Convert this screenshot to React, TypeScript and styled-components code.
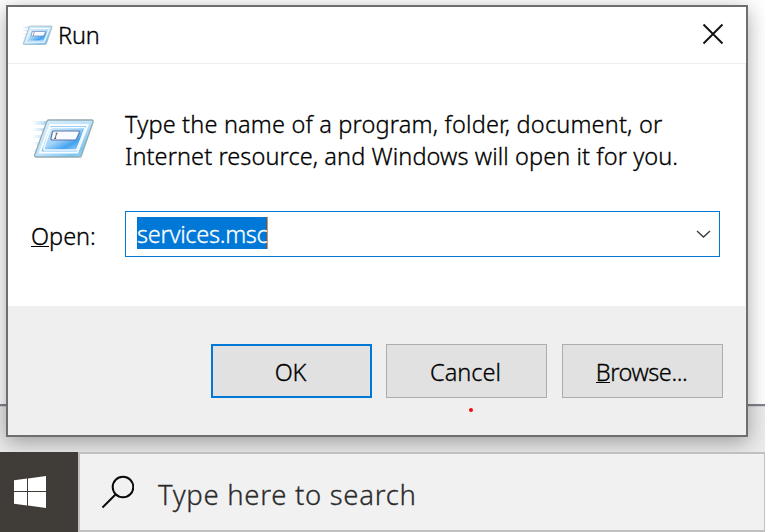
import React from 'react';
import styled, { createGlobalStyle } from 'styled-components';

const GlobalStyle = createGlobalStyle`
  * { box-sizing: border-box; }
  html, body { margin: 0; padding: 0; overflow: hidden; }
  body {
    font-family: "Noto Sans", "Open Sans", sans-serif;
    color: #000;
    -webkit-text-stroke: 0.3px;
  }
`;

const Desktop = styled.div`
  display: flex;
  flex-direction: column;
  width: 765px;
  height: 532px;
  overflow: hidden;
`;

const Backdrop = styled.main`
  flex: 0 0 452px;
  padding: 5px 0 0 6px;
  overflow: hidden;
  background: linear-gradient(#fff 0 404px, #82828e 404px 406px, #d2d2d8 406px 407px, #ebebeb 407px);
`;

const Dialog = styled.section`
  position: relative;
  display: flex;
  flex-direction: column;
  width: 742px;
  height: 432px;
  border: 2px solid #6e6e6e;
  background: #fff;
  box-shadow: 0 5px 20px rgba(0, 0, 0, 0.34);
`;

const TitleBar = styled.header`
  display: flex;
  align-items: center;
  flex: 0 0 57px;
  padding: 0 22px 0 14px;
  border-bottom: 1px solid #ededed;
`;

const Title = styled.h1<{ $spacing: number }>`
  flex: 1;
  margin: 0 0 0 5px;
  font-size: 23.5px;
  font-weight: 300;
  line-height: 32px;
  letter-spacing: ${(p) => p.$spacing}px;
`;

const CloseButton = styled.button`
  display: flex;
  width: 22px;
  height: 22px;
  margin-top: -2px;
  padding: 0;
  border: 0;
  background: none;
`;

const Body = styled.div`
  flex: 0 0 242px;
  padding: 44px 25px 0 22px;
  border-right: 1px solid #f0f0f0;
`;

const Message = styled.div`
  display: grid;
  grid-template-columns: 95px 1fr;
  height: 103px;
`;

const IconSlot = styled.div`
  padding: 10px 0 0 2px;
`;

const Line = styled.span<{ $spacing: number }>`
  display: block;
  width: max-content;
  font-size: 23.5px;
  font-weight: 300;
  line-height: 32px;
  letter-spacing: ${(p) => p.$spacing}px;
  white-space: nowrap;
`;

const Field = styled.div`
  display: grid;
  grid-template-columns: 95px 595px;
  align-items: center;
`;

const Label = styled.label`
  padding: 3px 0 0 1px;
  font-size: 23.5px;
  font-weight: 300;
  line-height: 32px;
`;

const Mnemonic = styled.span`
  box-shadow: 0 -1px 0 #000 inset;
  display: inline-block;
  height: 27px;
  line-height: 32px;
  vertical-align: top;
`;

const Combo = styled.div`
  display: flex;
  align-items: center;
  justify-content: space-between;
  height: 46px;
  padding: 0 8px 2px 11px;
  border: 1px solid #0078d7;
`;

const Selected = styled.span`
  width: 131px;
  height: 32px;
  background: #0078d7;
  border-right: 1px solid #ff8728;
  color: #fff;
  font-size: 23.5px;
  font-weight: 300;
  line-height: 35px;
  letter-spacing: -0.28px;
  white-space: nowrap;
`;

const Footer = styled.footer`
  display: flex;
  flex: 1;
  padding: 38px 0 0 203px;
  background: #efefef;
`;

const Button = styled.button<{ $primary?: boolean; $spacing?: number; $gap?: number }>`
  width: 161px;
  height: 54px;
  margin-right: ${(p) => p.$gap ?? 0}px;
  padding: 2px 2px 0 0;
  border: ${(p) => (p.$primary ? '2px solid #0078d7' : '1px solid #adadad')};
  background: #e1e1e1;
  color: #000;
  font: 300 23.5px/32px "Noto Sans", "Open Sans", sans-serif;
  letter-spacing: ${(p) => p.$spacing ?? 0}px;
  -webkit-text-stroke: 0.3px;
`;

const RedDot = styled.i`
  position: absolute;
  left: 460.5px;
  top: 400.5px;
  width: 4px;
  height: 4px;
  border-radius: 50%;
  background: #f00a14;
`;

const Taskbar = styled.nav`
  display: flex;
  flex: 0 0 80px;
`;

const Start = styled.button`
  flex: 0 0 78px;
  padding: 24px 0 0 14px;
  border: 0;
  background: #403d39;
  text-align: left;
  display: flex;
`;

const Search = styled.div`
  display: flex;
  align-items: center;
  flex: 1;
  padding: 0 0 0 21px;
  border: 2px solid #c0c0c0;
  border-right-width: 1px;
  background: #f1f1f1;
`;

const Placeholder = styled.span`
  margin: 5px 0 0 24px;
  color: #2b2b2b;
  font-size: 27.5px;
  font-weight: 300;
  line-height: 36px;
  letter-spacing: 0.7px;
  white-space: nowrap;
`;

function RunIcon({ width, height, id }: { width: number; height: number; id: string }) {
  return (
    <svg width={width} height={height} viewBox="0 0 64 42" preserveAspectRatio="none" display="block">
      <defs>
        <linearGradient id={`${id}-face`} x1="0" y1="0" x2="1" y2="1">
          <stop offset="0" stopColor="#d9eefb" />
          <stop offset="0.5" stopColor="#bfe3fa" />
          <stop offset="0.8" stopColor="#7cc5f4" />
          <stop offset="1" stopColor="#b8e4fb" />
        </linearGradient>
        <linearGradient id={`${id}-inner`} x1="0" y1="0" x2="1" y2="1">
          <stop offset="0" stopColor="#d3eafb" />
          <stop offset="0.45" stopColor="#a3d4f8" />
          <stop offset="0.7" stopColor="#45a3ee" />
          <stop offset="1" stopColor="#b4e0fb" />
        </linearGradient>
        <linearGradient id={`${id}-trail`}>
          <stop offset="0" stopColor="#8dc8f2" stopOpacity="0" />
          <stop offset="1" stopColor="#7cbcf0" stopOpacity="0.65" />
        </linearGradient>
      </defs>
      <path
        d="M0 3h16l-2 4H0zM0 10h14l-1 3H0zM0 17h12l-1 3H0zM0 24h10l-1 3H0zM0 31h7l-1 3H0z"
        fill={`url(#${id}-trail)`}
      />
      <path d="M4 41h45l13-37-1 5-11 32H5z" fill="#777" opacity=".28" />
      <path
        d="M17 2h43.500q2 0 1.500 2L50 37.500q-.6 1.500-2.500 1.500H4q-2 0-1.300-2L15 3.500q.6-1.500 2-1.500z"
        fill={`url(#${id}-face)`}
        stroke="#93abb0"
        strokeWidth="1.300"
      />
      <path d="M18.500 7h38L46 34.500H8z" fill="#86c4f2" stroke="#fafdff" strokeWidth="2" />
      <path
        d="M20.500 9.500h32.500q1 0 .5 1.500l-7.500 19.500q-.5 1.500-2 1.500H13.500q-2 0-1.300-2L18.500 11q.5-1.500 2-1.500z"
        fill={`url(#${id}-inner)`}
        stroke="#f4faff"
        strokeWidth="1.500"
      />
      <path
        d="M22 13h24.500q2 0 1.500 1.700L45.500 20.500q-.8 1.500-2.500 1.500H21q-2.500 0-1.500-2.500l1-4.500q.4-2 1.500-2z"
        fill="#f8fbff"
        stroke="#5e75a7"
        strokeWidth="1.200"
      />
      <path d="M24 15.200h2m-1 0-1.500 5.300m-1 0h2" stroke="#596064" strokeWidth="1" fill="none" />
    </svg>
  );
}

export default function App() {
  return (
    <>
      <GlobalStyle />
      <Desktop>
        <Backdrop>
          <Dialog role="dialog" aria-label="Run">
            <TitleBar>
              <RunIcon width={31} height={21} id="title" />
              <Title $spacing={-0.2}>Run</Title>
              <CloseButton aria-label="Close">
                <svg width="22" height="22" fill="none" stroke="#111" strokeWidth="1.900">
                  <path d="M1.500 1.500l19 19M20.500 1.500l-19 19" />
                </svg>
              </CloseButton>
            </TitleBar>
            <Body>
              <Message>
                <IconSlot>
                  <RunIcon width={63} height={42} id="large" />
                </IconSlot>
                <div>
                  <Line $spacing={0.18}>Type the name of a program, folder, document, or</Line>
                  <Line $spacing={0.09}>Internet resource, and Windows will open it for you.</Line>
                </div>
              </Message>
              <Field>
                <Label><Mnemonic>O</Mnemonic>pen:</Label>
                <Combo>
                  <Selected>services.msc</Selected>
                  <svg width="15" height="10" fill="none" stroke="#3c3c3c" strokeWidth="1.400">
                    <path d="M1 3l6.500 6L14 3" />
                  </svg>
                </Combo>
              </Field>
            </Body>
            <Footer>
              <Button $primary $spacing={-0.3} $gap={14}>OK</Button>
              <Button $spacing={0} $gap={15}>Cancel</Button>
              <Button $spacing={-0.45}><Mnemonic>B</Mnemonic>rowse...</Button>
            </Footer>
            <RedDot />
          </Dialog>
        </Backdrop>
        <Taskbar>
          <Start aria-label="Start">
            <svg width="32" height="32" fill="#fff">
              <path d="M0 4.300L13 2.500V15H0zM14 2.400L32 0v15H14zM0 16h13v13.500L0 27.800zM14 16h18v16l-18-2.400z" />
            </svg>
          </Start>
          <Search>
            <svg width="33" height="34" fill="none" stroke="#0a0a0a" strokeWidth="2">
              <circle cx="22" cy="12" r="10.300" />
              <path d="M15 19L1.500 32.500" />
            </svg>
            <Placeholder>Type here to search</Placeholder>
          </Search>
        </Taskbar>
      </Desktop>
    </>
  );
}
